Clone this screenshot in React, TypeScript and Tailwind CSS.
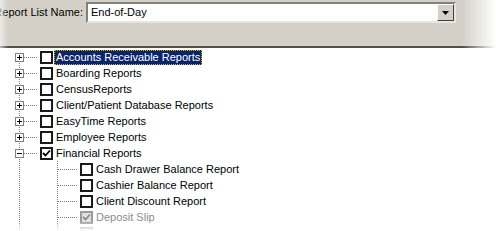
import React from 'react';

type Item = {
  label: string;
  level: 0 | 1;
  expander?: 'plus' | 'minus';
  checked?: boolean;
  disabled?: boolean;
  selected?: boolean;
};

const items: Item[] = [
  { label: 'Accounts Receivable Reports', level: 0, expander: 'plus', selected: true },
  { label: 'Boarding Reports', level: 0, expander: 'plus' },
  { label: 'CensusReports', level: 0, expander: 'plus' },
  { label: 'Client/Patient Database Reports', level: 0, expander: 'plus' },
  { label: 'EasyTime Reports', level: 0, expander: 'plus' },
  { label: 'Employee Reports', level: 0, expander: 'plus' },
  { label: 'Financial Reports', level: 0, expander: 'minus', checked: true },
  { label: 'Cash Drawer Balance Report', level: 1 },
  { label: 'Cashier Balance Report', level: 1 },
  { label: 'Client Discount Report', level: 1 },
  { label: 'Deposit Slip', level: 1, checked: true, disabled: true },
  { label: '', level: 1, disabled: true },
];

const Connector = ({ item, index }: { item: Item; index: number }) => {
  const w = item.level === 0 ? 38 : 78;
  const dots = { stroke: '#808080', strokeDasharray: '1 1', shapeRendering: 'crispEdges' as const };
  return (
    <svg width={w} height={16} className="shrink-0">
      {/* root line */}
      <line x1={19.5} y1={index === 0 ? 8 : 0} x2={19.5} y2={16} {...dots} />
      {item.level === 0 && <line x1={20} y1={8.5} x2={38} y2={8.5} {...dots} />}
      {item.level === 1 && (
        <>
          <line x1={57.5} y1={0} x2={57.5} y2={16} {...dots} />
          <line x1={58} y1={8.5} x2={78} y2={8.5} {...dots} />
        </>
      )}
      {item.expander && (
        <g shapeRendering="crispEdges">
          <rect x={15.5} y={4.5} width={8} height={8} fill="#fff" stroke="#808080" />
          <line x1={17} y1={8.5} x2={22} y2={8.5} stroke="#000" />
          {item.expander === 'plus' && <line x1={19.5} y1={6} x2={19.5} y2={11} stroke="#000" />}
        </g>
      )}
    </svg>
  );
};

const Check = ({ checked, disabled }: { checked?: boolean; disabled?: boolean }) => (
  <div
    className={`w-[13px] h-[13px] shrink-0 border-2 flex items-center justify-center ${
      disabled ? 'border-[#9a9a9a] bg-[#e4e2dc]' : 'border-[#1a1a1a] bg-white'
    }`}
  >
    {checked && (
      <svg width={9} height={9} viewBox="0 0 9 9">
        <path d="M1 4 L3.5 6.5 L8 1.5" fill="none" stroke={disabled ? '#8a8a8a' : '#000'} strokeWidth={1.8} />
      </svg>
    )}
  </div>
);

export default function App() {
  return (
    <div
      className="relative w-[496px] h-[231px] overflow-hidden bg-white text-[11px] text-black"
      style={{ fontFamily: '"Liberation Sans", Arial, sans-serif' }}
    >
      <div className="h-[48px] bg-[#d4d0c8] border-b-2 border-[#505050] pt-[2px]">
        <div className="flex items-start">
          <div className="w-[86px] h-[21px] flex items-center justify-end overflow-hidden whitespace-nowrap pr-[3px]">
            Report List Name:
          </div>
          <div className="w-[370px] h-[21px] flex bg-white border-2 border-t-[#808080] border-l-[#808080] border-b-[#e8e6e0] border-r-[#e8e6e0]">
            <div className="flex-1 flex items-center pl-[3px]">End-of-Day</div>
            <div className="w-[17px] h-[17px] bg-[#d4d0c8] border border-t-white border-l-white border-b-[#404040] border-r-[#404040] flex items-center justify-center">
              <svg width={7} height={4} viewBox="0 0 7 4">
                <path d="M0 0 H7 L3.5 4 Z" fill="#000" />
              </svg>
            </div>
          </div>
        </div>
      </div>

      <div className="pt-px">
        {items.map((item, i) => (
          <div key={i} className="flex items-center h-[16px]">
            <Connector item={item} index={i} />
            <div className="ml-[2px]">
              <Check checked={item.checked} disabled={item.disabled} />
            </div>
            {item.label && (
              <div
                className={`ml-px h-[15px] flex items-center px-[2px] whitespace-nowrap ${
                  item.selected
                    ? 'bg-[#0a246a] text-white outline outline-1 outline-dotted outline-[#c8b060] -outline-offset-1'
                    : item.disabled
                    ? 'text-[#8c8c8c]'
                    : ''
                }`}
              >
                {item.label}
              </div>
            )}
          </div>
        ))}
      </div>

      {/* photo-style vignette on the edges */}
      <div className="pointer-events-none absolute top-0 right-0 w-[34px] h-[50px] bg-gradient-to-r from-transparent to-white" />
      <div className="pointer-events-none absolute top-0 left-0 w-[8px] h-[48px] bg-gradient-to-l from-transparent to-white/60" />
      <div className="pointer-events-none absolute bottom-0 left-0 right-0 h-[10px] bg-gradient-to-b from-transparent to-white" />
    </div>
  );
}
